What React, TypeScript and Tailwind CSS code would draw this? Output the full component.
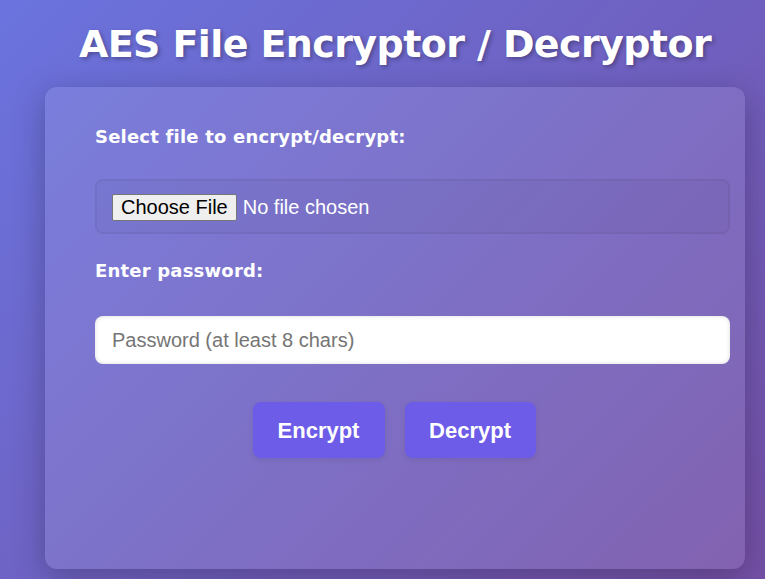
import React from "react";

export default function App() {
  return (
    <div className="min-h-[579px] w-[765px] overflow-hidden bg-[linear-gradient(135deg,#6a73de_0%,#7450a6_100%)] font-['Liberation_Sans',Arial,sans-serif]">
      <div className="w-[790px]">
        <h1 className="pt-[21px] text-center text-[38px] font-bold leading-[46px] text-white [text-shadow:2px_2px_4px_rgba(0,0,0,0.3)] font-['DejaVu_Sans',sans-serif] tracking-[-0.6px]">
          AES File Encryptor / Decryptor
        </h1>
        <div className="ml-[45px] mt-[20px] h-[482px] w-[700px] rounded-[12px] bg-white/10 shadow-[0_8px_32px_rgba(0,0,0,0.25)] pl-[50px] pr-[15px] pt-[38px]">
          <label className="block text-[18px] font-bold leading-[24px] text-white font-['DejaVu_Sans',sans-serif] tracking-[0.2px]">
            Select file to encrypt/decrypt:
          </label>
          <div className="mt-[30px] flex h-[55px] items-center rounded-[8px] border-2 border-black/5 bg-black/[0.03] pl-[15px]">
            <input
              type="file"
              className="text-[20px] text-white file:mr-[6px] file:h-[27px] file:rounded-[2px] file:border file:border-[#767676] file:bg-[#efefef] file:px-[8px] file:text-black file:leading-[23px]"
            />
          </div>
          <label className="mt-[25px] block text-[18px] font-bold leading-[24px] text-white font-['DejaVu_Sans',sans-serif] tracking-[0.2px]">
            Enter password:
          </label>
          <input
            type="password"
            placeholder="Password (at least 8 chars)"
            className="mt-[33px] block h-[48px] w-full rounded-[8px] bg-white px-[17px] text-[20px] text-black placeholder:text-[#757575] shadow-[inset_0_0_4px_rgba(0,0,0,0.15)] outline-none"
          />
          <div className="mt-[38px] flex justify-center gap-[20px] pr-[37px]">
            <button className="h-[56px] w-[132px] rounded-[8px] bg-[#6c5ce7] text-[22px] font-bold text-white shadow-[0_2px_6px_rgba(0,0,0,0.08)]">
              Encrypt
            </button>
            <button className="h-[56px] w-[131px] rounded-[8px] bg-[#6c5ce7] text-[22px] font-bold text-white shadow-[0_2px_6px_rgba(0,0,0,0.08)]">
              Decrypt
            </button>
          </div>
        </div>
      </div>
    </div>
  );
}
